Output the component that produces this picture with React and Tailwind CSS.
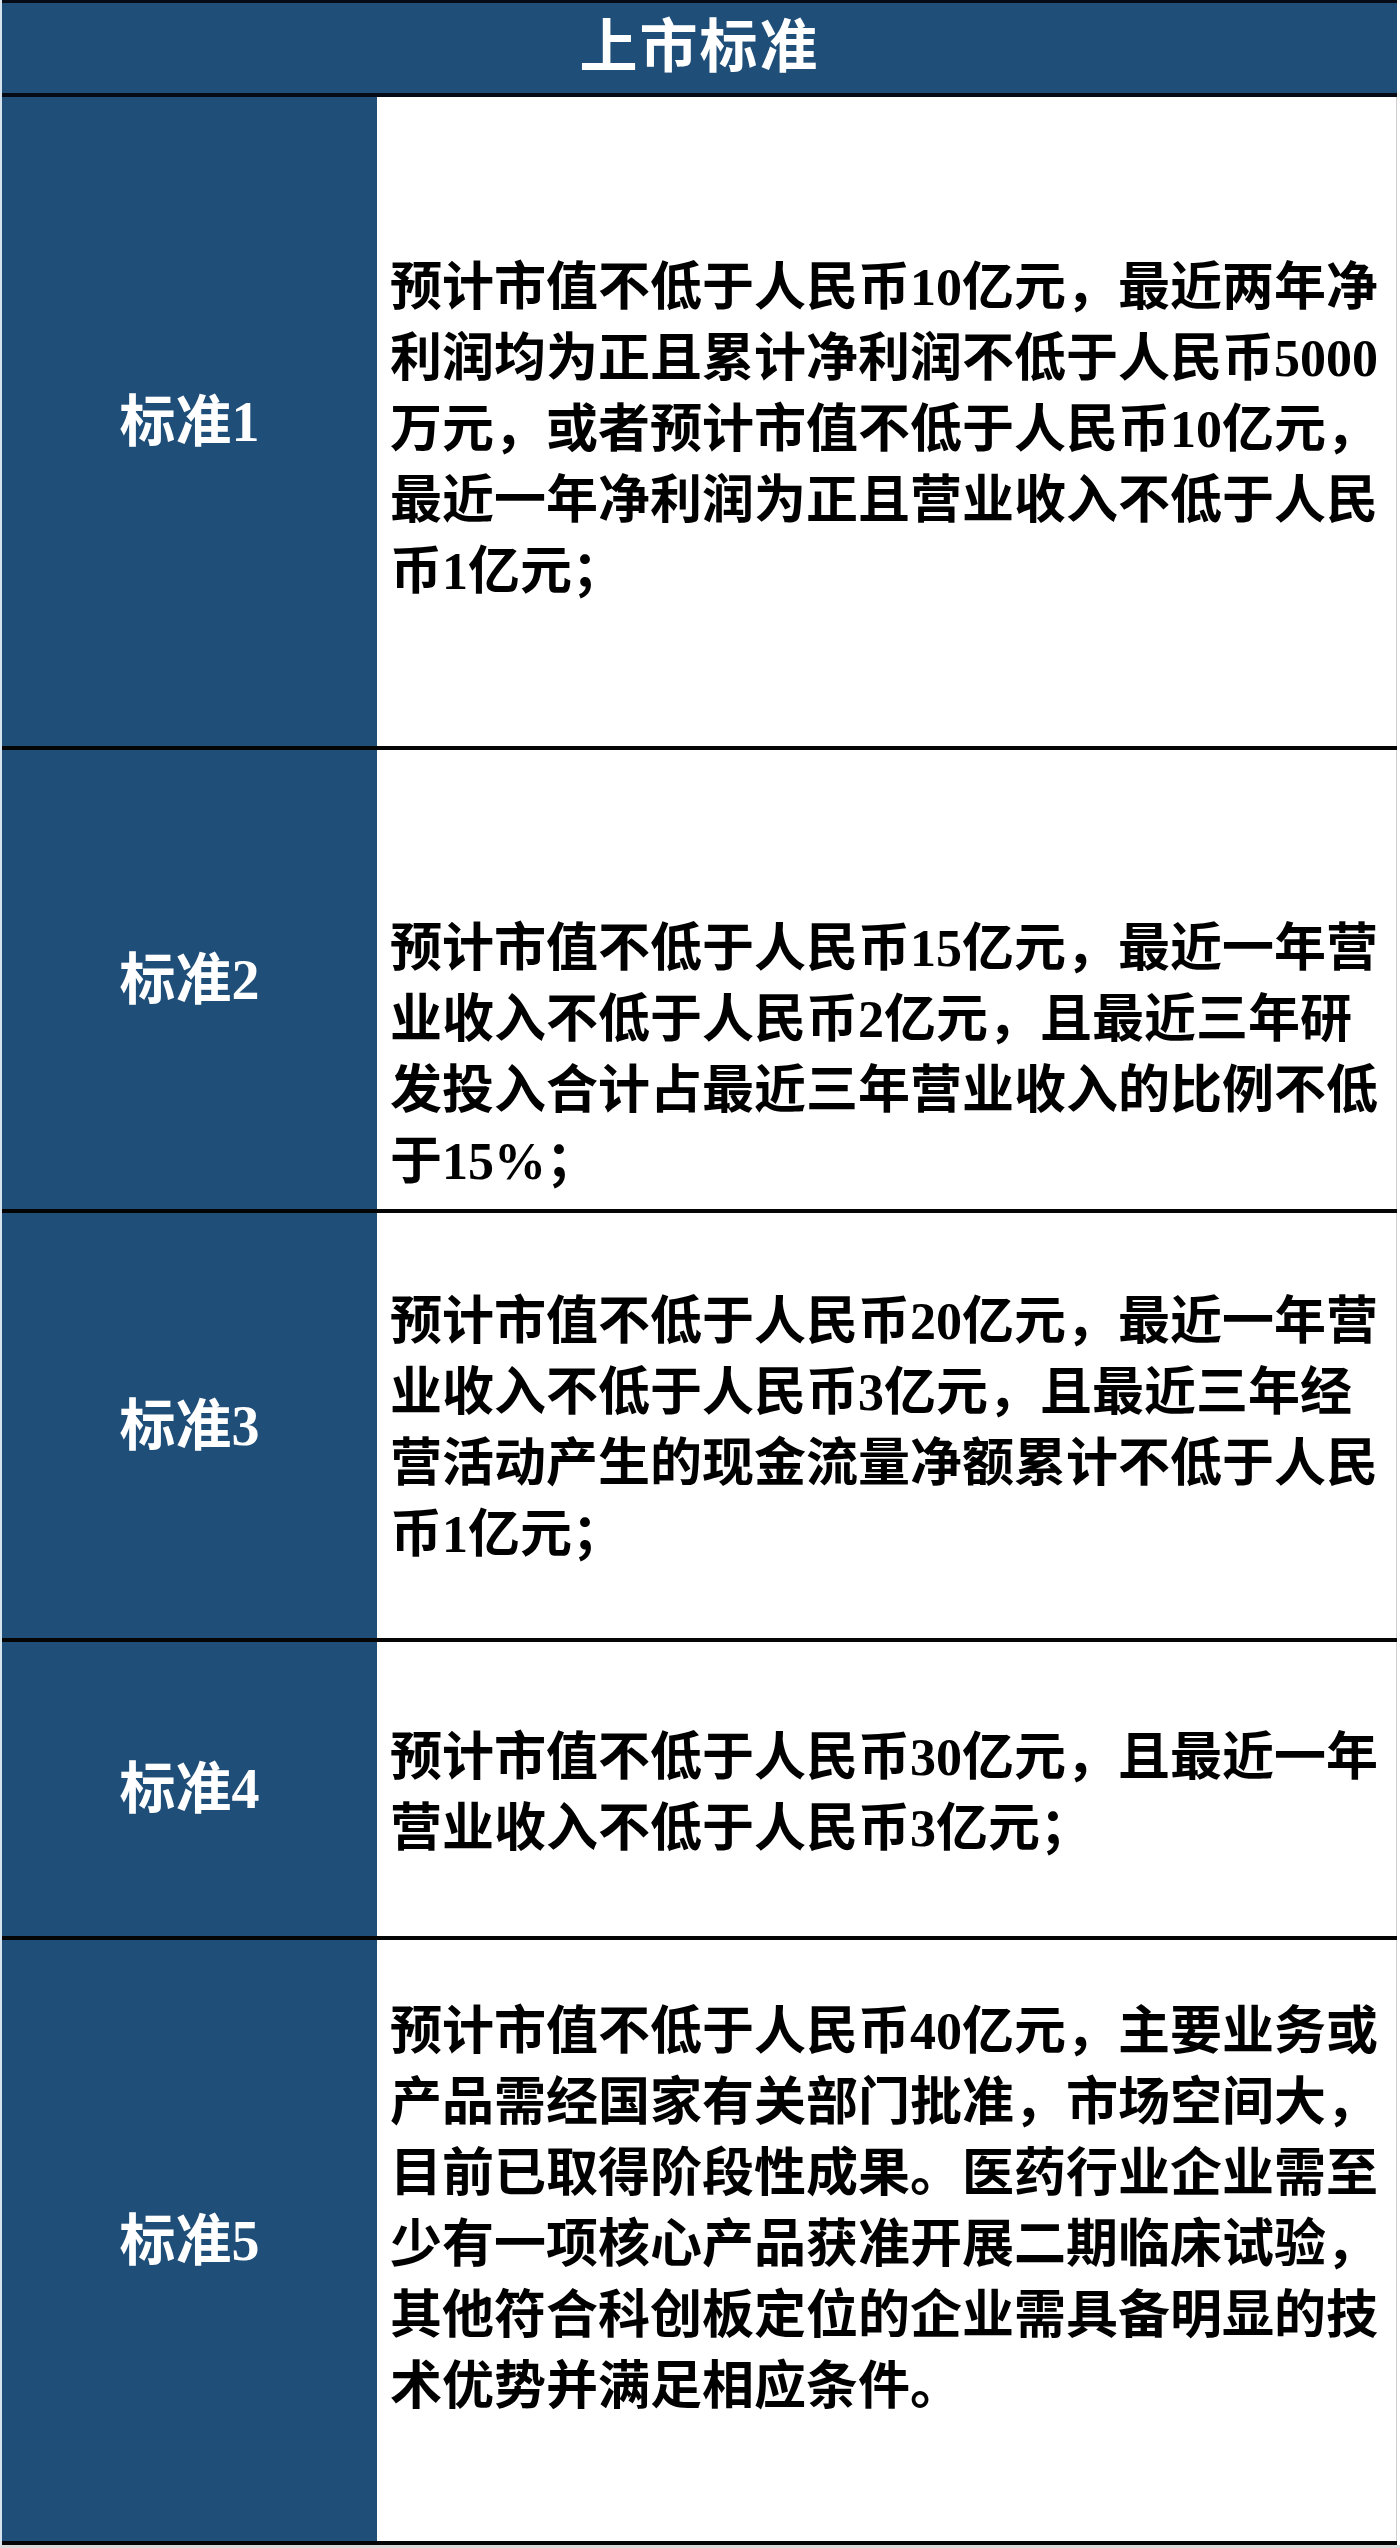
import React from 'react';

const rows = [
  {
    label: '标准1',
    h: 'h-[653px]',
    pad: 'pt-[16px]',
    lines: [
      '预计市值不低于人民币10亿元，最近两年净',
      '利润均为正且累计净利润不低于人民币5000',
      '万元，或者预计市值不低于人民币10亿元，',
      '最近一年净利润为正且营业收入不低于人民',
      '币1亿元；',
    ],
  },
  {
    label: '标准2',
    h: 'h-[463px]',
    pad: 'pt-[150px]',
    lines: [
      '预计市值不低于人民币15亿元，最近一年营',
      '业收入不低于人民币2亿元，且最近三年研',
      '发投入合计占最近三年营业收入的比例不低',
      '于15%；',
    ],
  },
  {
    label: '标准3',
    h: 'h-[429px]',
    pad: 'pt-[4px]',
    lines: [
      '预计市值不低于人民币20亿元，最近一年营',
      '业收入不低于人民币3亿元，且最近三年经',
      '营活动产生的现金流量净额累计不低于人民',
      '币1亿元；',
    ],
  },
  {
    label: '标准4',
    h: 'h-[298px]',
    pad: 'pt-[8px]',
    lines: ['预计市值不低于人民币30亿元，且最近一年', '营业收入不低于人民币3亿元；'],
  },
  {
    label: '标准5',
    h: 'h-[605px]',
    pad: 'pb-[64px]',
    lines: [
      '预计市值不低于人民币40亿元，主要业务或',
      '产品需经国家有关部门批准，市场空间大，',
      '目前已取得阶段性成果。医药行业企业需至',
      '少有一项核心产品获准开展二期临床试验，',
      '其他符合科创板定位的企业需具备明显的技',
      '术优势并满足相应条件。',
    ],
  },
];

const font = "font-['Liberation_Serif','Noto_Sans_CJK_SC',serif]";

export default function App() {
  return (
    <div className={`w-[1400px] h-[2548px] bg-[#d9d9d9] ${font}`}>
      <div className="w-[1400px] h-[2545px] bg-white">
        <div className="w-[1397px] border-l-[2px] border-[#d6e4f0]">
          {/* header */}
          <div className="h-[97px] bg-[#1f4e79] border-t-[3px] border-b-[4px] border-[#070b16] flex items-center justify-center">
            <span className="text-white text-[58px] font-bold leading-none tracking-[2px]">上市标准</span>
          </div>

          {rows.map((row) => (
            <div key={row.label} className={`flex border-b-[4px] border-[#050505] ${row.h}`}>
              <div className="w-[375px] shrink-0 bg-[#1f4e79] flex items-center justify-center">
                <span className="text-white text-[56px] font-bold leading-none">{row.label}</span>
              </div>
              <div className={`flex-1 flex items-center pl-[13px] border-r border-[#d0d0d0] ${row.pad}`}>
                <div className="text-black text-[52px] font-bold leading-[71px]">
                  {row.lines.map((line, i) => (
                    <div key={i} className="whitespace-nowrap">
                      {line}
                    </div>
                  ))}
                </div>
              </div>
            </div>
          ))}
        </div>
      </div>
    </div>
  );
}
